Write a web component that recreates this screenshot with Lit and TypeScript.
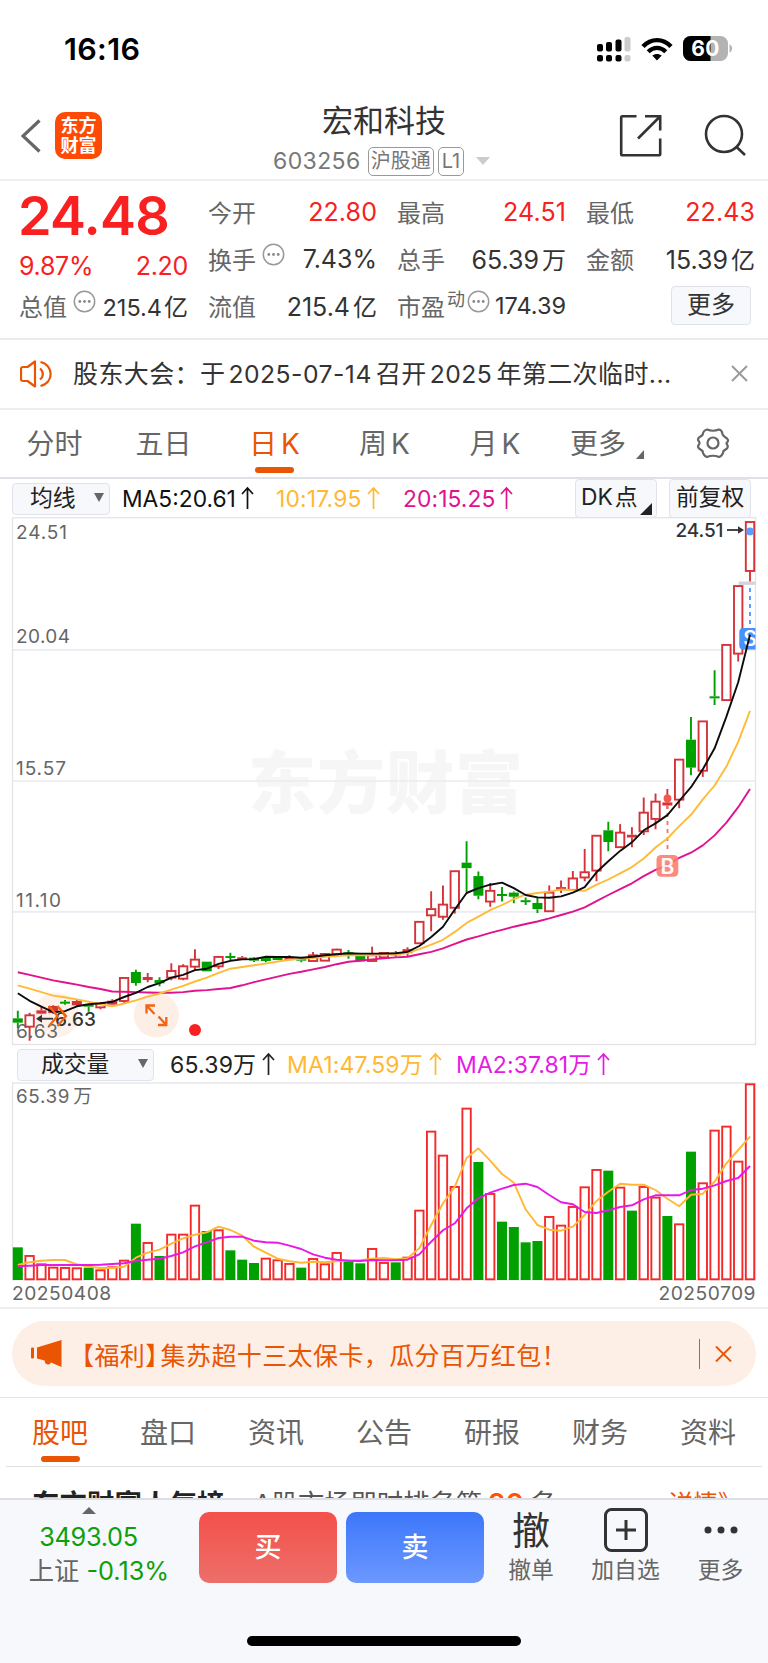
import { LitElement, html, css, svg } from "lit";
import { customElement } from "lit/decorators.js";

type Candle = [string, number, number, number, number];

// kind (g = falling, r = rising outline, f = rising solid), body top, body bottom, high, low
// Quiet opening stretch, in thirds of a pixel.
const EARLY: Candle[] = [
  ["g", 1525, 1538, 1502, 1555], ["r", 1515, 1550, 1508, 1592], ["f", 1501, 1511, 1490, 1513], ["f", 1488, 1509, 1486, 1512],
  ["g", 1475, 1480, 1470, 1484], ["f", 1473, 1486, 1470, 1490], ["g", 1484, 1490, 1482, 1505], ["r", 1481, 1492, 1476, 1498],
  ["f", 1472, 1484, 1468, 1486], ["r", 1403, 1473, 1403, 1481], ["g", 1386, 1419, 1379, 1427], ["f", 1401, 1410, 1389, 1417],
  ["g", 1410, 1420, 1402, 1429], ["r", 1382, 1403, 1360, 1411], ["r", 1368, 1406, 1363, 1411], ["r", 1348, 1370, 1318, 1382],
  ["g", 1355, 1384, 1355, 1384], ["r", 1340, 1369, 1340, 1377], ["g", 1338, 1342, 1328, 1351], ["f", 1342, 1349, 1338, 1350],
  ["g", 1343, 1352, 1341, 1356], ["g", 1344, 1353, 1343, 1357], ["g", 1342, 1350, 1342, 1350], ["f", 1342, 1350, 1336, 1351],
  ["g", 1346, 1352, 1345, 1357], ["r", 1335, 1353, 1326, 1354], ["r", 1331, 1352, 1331, 1352], ["r", 1318, 1333, 1316, 1333],
  ["g", 1327, 1334, 1320, 1346], ["g", 1334, 1354, 1334, 1354], ["r", 1335, 1353, 1310, 1353], ["r", 1328, 1342, 1328, 1342],
  ["f", 1328, 1336, 1323, 1340],
];
// The rally, in units of the moving-average scale.
const RALLY: Candle[] = [
  ["f", 1275, 1287, 1270, 1298], ["r", 1195, 1258, 1195, 1258], ["r", 1158, 1177, 1107, 1223],
  ["r", 1145, 1181, 1090, 1190], ["r", 1048, 1155, 1048, 1172], ["g", 1024, 1040, 962, 1110], ["g", 1063, 1120, 1050, 1130],
  ["r", 1105, 1137, 1083, 1152], ["g", 1115, 1119, 1095, 1137], ["g", 1111, 1123, 1108, 1142], ["g", 1133, 1137, 1125, 1147],
  ["g", 1141, 1159, 1123, 1170], ["r", 1110, 1165, 1090, 1165], ["f", 1095, 1103, 1076, 1112], ["r", 1069, 1103, 1048, 1106],
  ["r", 1051, 1067, 984, 1078], ["r", 945, 1047, 945, 1078], ["g", 930, 964, 905, 991], ["r", 936, 979, 912, 979],
  ["f", 943, 951, 921, 979], ["r", 878, 933, 835, 944], ["r", 846, 897, 823, 927], ["f", 849, 858, 810, 868],
  ["r", 724, 841, 724, 866], ["g", 667, 748, 601, 770], ["r", 613, 757, 613, 775], ["g", 541, 547, 465, 566],
  ["r", 391, 552, 391, 552], ["r", 220, 417, 220, 440], ["r", 34, 177, 34, 208],
];
const MA5 = [1403, 1425, 1442, 1458, 1455, 1441, 1435, 1432, 1428, 1414, 1402, 1385, 1374, 1358, 1350, 1336, 1332, 1318, 1309, 1305, 1304, 1297, 1298, 1298, 1300, 1297, 1293, 1290, 1287, 1288, 1288, 1288, 1287, 1283, 1266, 1240, 1210, 1160, 1112, 1098, 1088, 1082, 1098, 1118, 1125, 1126, 1122, 1111, 1095, 1052, 1020, 990, 965, 930, 910, 886, 845, 805, 753, 692, 600, 500, 362];
const MA10 = [1380, 1390, 1400, 1410, 1415, 1421, 1428, 1435, 1441, 1433, 1424, 1413, 1404, 1393, 1382, 1369, 1358, 1344, 1332, 1327, 1322, 1317, 1311, 1306, 1303, 1301, 1297, 1295, 1293, 1293, 1293, 1291, 1290, 1287, 1275, 1262, 1248, 1225, 1199, 1181, 1162, 1147, 1130, 1117, 1112, 1108, 1102, 1104, 1106, 1088, 1073, 1055, 1037, 1012, 980, 954, 918, 885, 840, 800, 745, 673, 583];
const MA20 = [1342, 1350, 1358, 1366, 1372, 1378, 1385, 1391, 1398, 1399, 1400, 1401, 1402, 1402, 1400, 1396, 1394, 1391, 1388, 1380, 1371, 1363, 1355, 1347, 1341, 1334, 1327, 1319, 1312, 1309, 1305, 1302, 1299, 1297, 1290, 1283, 1273, 1260, 1247, 1238, 1228, 1219, 1210, 1202, 1195, 1186, 1176, 1166, 1154, 1136, 1118, 1101, 1084, 1063, 1045, 1032, 1010, 995, 974, 945, 908, 863, 810];

const VOLUMES = "g622 r647 r672 r682 r683 r684 g683 r690 r681 r661 g551 r608 g648 r583 r583 r496 g573 r570 g631 g659 g669 r655 r660 r671 g683 r656 r672 r638 g664 g670 r626 r668 g667 r652 r511 r274 r346 r440 r205 g366 r461 g545 g561 g607 g603 r530 r556 r500 r441 r389 g392 r442 g512 r440 r472 g528 r552 g335 r429 r271 r259 r364 r132".split(" ");
const VMA1 = [675, 667, 662, 660, 660, 673, 680, 684, 684, 680, 653, 638, 629, 611, 595, 584, 577, 560, 570, 587, 620, 638, 656, 664, 668, 665, 667, 664, 661, 661, 656, 654, 658, 655, 625, 555, 490, 440, 354, 325, 362, 402, 428, 508, 555, 569, 572, 560, 525, 483, 455, 431, 434, 434, 450, 476, 499, 464, 461, 425, 370, 330, 290];
const VMA2 = [679, 677, 675, 675, 675, 675, 675, 674, 672, 670, 663, 659, 656, 648, 637, 619, 607, 594, 590, 590, 602, 607, 608, 617, 627, 643, 653, 659, 662, 663, 660, 661, 661, 659, 643, 605, 571, 550, 505, 475, 458, 446, 435, 431, 441, 465, 487, 493, 516, 519, 511, 501, 496, 478, 466, 466, 466, 450, 446, 436, 423, 414, 378];

const THIRD = 3;
const PRICE_SCALE = 2.9037;
const cx = (i: number) => 17.8 + 11.81 * i;
const line = (ys: number[], base: number, scale: number) => ys.map((y, i) => `${cx(i).toFixed(1)},${(base + y / scale).toFixed(1)}`).join(" ");
const toPixels = (scale: number) => ([k, ...v]: Candle): Candle => [k, ...v.map((n) => 510 + n / scale)] as Candle;
const CANDLES = [...EARLY.map(toPixels(THIRD)), ...RALLY.map(toPixels(PRICE_SCALE))];

const upArrow = html`<svg class="up" width="13" height="24" viewBox="0 0 13 24" fill="none" stroke="currentColor" stroke-width="1.7"><path d="M6.5 23V2M1 8l5.5-6L12 8"/></svg>`;
const info = html`<svg class="info" width="23" height="23" viewBox="0 0 23 23"><circle cx="11.5" cy="11.5" r="10.2" fill="none" stroke="#999" stroke-width="1.5"/><g fill="#888"><circle cx="6.8" cy="11.5" r="1.4"/><circle cx="11.5" cy="11.5" r="1.4"/><circle cx="16.2" cy="11.5" r="1.4"/></g></svg>`;

@customElement("kline-chart")
export class KlineChart extends LitElement {
  static styles = css`
    :host { display: block; height: 529px; }
    svg { display: block; }
    text { font-family: Inter, "Liberation Sans", sans-serif; font-size: 19px; fill: #666; }
    .mark { font-family: "Noto Sans CJK SC", sans-serif; font-size: 68px; font-weight: 900; fill: #f6f6f6; }
    .dark { fill: #333; font-weight: 500; }
    .badge { fill: #fff; font-size: 21px; font-weight: 600; text-anchor: middle; }
  `;
  render() {
    return html`<svg width="768" height="529" viewBox="0 517 768 529">
      <text class="mark" x="248" y="807.500" textLength="275">东方财富</text>
      <path d="M12.500 649.800H755.500M12.500 781H755.500M12.500 911.900H755.500" fill="none" stroke="#e9ecf2" stroke-width="1.700"/>
      <rect x="12.500" y="517.700" width="743" height="526.800" fill="none" stroke="#e4e4e8" stroke-width="1.300"/>
      <text x="16" y="539.300" textLength="51">24.51</text>
      <text x="16" y="643.200" textLength="54">20.04</text>
      <text x="16" y="774.500" textLength="50">15.57</text>
      <text x="16" y="906.700" textLength="45">11.10</text>
      <circle cx="56" cy="1015" r="22.500" fill="#fdeee6" opacity=".85"/>
      <circle cx="156.300" cy="1015" r="22.500" fill="#fdeee6"/>
      ${CANDLES.map(([k, t, b, h, l], i) => {
        const x = cx(i);
        const c = k === "g" ? "#00a000" : "#d5333a";
        return svg`<g stroke=${c} stroke-width="1.900">
          <path d="M${x} ${h}V${t}M${x} ${b}V${l}"/>
          ${k === "r"
            ? svg`<rect x=${x - 4.2} y=${t + 0.3} width="8.400" height=${b - t - 0.3} fill="#fff"/>`
            : svg`<rect x=${x - 5} y=${t} width="10" height=${Math.max(b - t, 2)} fill=${c} stroke="none"/>`}
        </g>`;
      })}
      <text x="16" y="1037.500" textLength="42">6.63</text>
      <path d="M738.500 583.200H755.500" stroke="#d2d4da" stroke-width="3.300"/>
      <path d="M750 588V624" stroke="#5a9cff" stroke-width="2" stroke-dasharray="4 4"/>
      <circle cx="750" cy="531.400" r="3.900" fill="#5a9cff"/>
      <clipPath id="edge"><rect x="0" y="517" width="755.500" height="529"/></clipPath>
      <g clip-path="url(#edge)"><rect x="739.300" y="628" width="21.500" height="21.500" rx="4" fill="#4a90fb"/><text class="badge" x="750" y="646.300">S</text></g>
      <path d="M667.500 805V851" stroke="#fa6d62" stroke-width="1.800" stroke-dasharray="4 4"/>
      <circle cx="667.500" cy="798.500" r="3.900" fill="#f4574d"/>
      <g fill="none" stroke-width="1.900" stroke-linejoin="round">
        <polyline points=${line(MA20, 510, PRICE_SCALE)} stroke="#e0128e"/>
        <polyline points=${line(MA10, 510, PRICE_SCALE)} stroke="#ffbb38"/>
        <polyline points=${line(MA5, 510, PRICE_SCALE)} stroke="#0c0c0c"/>
      </g>
      <g opacity=".88"><rect x="656.500" y="855" width="21.800" height="21.800" rx="4.500" fill="#fd7a6e"/><text class="badge" x="667.500" y="873.600">B</text></g>
      <text class="dark" x="675.500" y="537.200" textLength="48">24.51</text>
      <g stroke="#333" fill="#333" stroke-width="1.800"><path d="M727 530H740"/><path d="M738 526.300L744 530L738 533.700Z" stroke="none"/><path d="M53 1018.700H40"/><path d="M42 1014.700L36 1018.700L42 1022.700Z" stroke="none"/></g>
      <text class="dark" x="55" y="1025.800" textLength="41">6.63</text>
      <g fill="none" stroke="#f26411" stroke-width="2.300"><path d="M49 1006L57.500 1016L49 1026M57.500 1006L66 1016L57.500 1026"/><path d="M146.500 1013.500V1005.500H155M147 1006L154.500 1014M158 1025H166.300V1017M165.800 1024.500L158.500 1016.500"/></g>
      <circle cx="195" cy="1030" r="6" fill="#f82020"/>
    </svg>`;
  }
}

@customElement("volume-chart")
export class VolumeChart extends LitElement {
  static styles = css`
    :host { display: block; height: 199px; }
    svg { display: block; }
    text { font-family: Inter, "Noto Sans CJK SC", sans-serif; font-size: 18.8px; fill: #666; }
  `;
  render() {
    return html`<svg width="768" height="199" viewBox="0 1082 768 199">
      <rect x="12.500" y="1083" width="743" height="196.800" fill="none" stroke="#e4e4e8" stroke-width="1.3"/>
      <text x="16" y="1102.500" textLength="76">65.39<tspan dx="3">万</tspan></text>
      ${VOLUMES.map((v, i) => {
        const y = 1040 + Number(v.slice(1)) / 3;
        return v[0] === "g"
          ? svg`<rect x=${cx(i) - 5} y=${y} width="10" height=${1280 - y} fill="#00a000"/>`
          : svg`<rect x=${cx(i) - 4.2} y=${y + 0.3} width="8.400" height=${1279 - y} fill="#fff" stroke="#f42a2a" stroke-width="1.900"/>`;
      })}
      <g fill="none" stroke-width="1.900" stroke-linejoin="round">
        <polyline points=${line(VMA1, 1040, THIRD)} stroke="#ffb833"/>
        <polyline points=${line(VMA2, 1040, THIRD)} stroke="#e619e6"/>
      </g>
    </svg>`;
  }
}

@customElement("app-root")
export class AppRoot extends LitElement {
  static styles = css`
    :host { display: block; width: 768px; height: 1663px; overflow: hidden; background: #fff; color: #333; font-family: Inter, "Noto Sans CJK SC", sans-serif; white-space: nowrap; }
    * { box-sizing: border-box; }
    svg { display: block; flex: none; }
    .row { display: flex; align-items: center; }
    .status { height: 90px; padding: 7px 35px 0 64px; justify-content: space-between; color: #000; }
    .clock { font-size: 30.5px; font-weight: 600; letter-spacing: .35px; }
    .status-icons { gap: 10px; }
    .header { height: 91px; border-bottom: 2px solid #efeff0; display: grid; grid-template-columns: 34px 48px 1fr 85px 42px; padding: 0 22px 0 21px; }
    .back { padding-top: 29px; }
    .logo { width: 47px; height: 47px; margin-top: 22px; border-radius: 10px; background: #ff4a05; color: #fff; font-size: 18px; line-height: 19.5px; font-weight: 700; text-align: center; padding-top: 4px; }
    .title { padding-left: 150px; }
    .name { font-size: 31px; line-height: 36px; padding: 13px 0 0 69px; }
    .code { color: #777; font-size: 23px; letter-spacing: .4px; height: 30px; margin-top: 7px; padding-left: 20px; }
    .tag { height: 29px; border: 1.5px solid #999; border-radius: 5px; font-size: 20px; line-height: 26px; letter-spacing: 0; padding: 0 2px; margin-left: 7px; color: #777; }
    .tag.l1 { margin-left: 4px; padding: 0 3px; }
    .caret { margin-left: 12px; }
    .head-icon { padding-top: 24px; }
    .quote { height: 159px; padding: 0 13px 0 19px; display: grid; grid-template-columns: 169px 169px 169px 169px; column-gap: 20px; border-bottom: 2px solid #ebebed; }
    .col { display: flex; flex-direction: column; padding-top: 7px; }
    .cell { display: flex; align-items: center; height: 47px; font-size: 25px; color: #333; }
    .cell > .label { color: #666; font-size: 24px; }
    .cell > .value { margin-left: auto; }
    .cell > .value.red { letter-spacing: .1px; }
    .value .han { font-size: 24px; margin-left: 3px; }
    .red { color: #f82020; }
    .price { color: #f82020; font-weight: 600; font-size: 54px; line-height: 56px; letter-spacing: -.7px; height: 64px; margin-left: -1px; margin-top: 0; }
    .change { display: flex; justify-content: space-between; color: #f82020; font-size: 25px; letter-spacing: -.3px; line-height: 30px; margin-top: -1px; height: 31px; }
    .info { margin: -9px 0 0 6px; }
    .small { font-size: 23.5px; }
    .small .han { margin-left: 2px; }
    .super { font-size: 18px; color: #666; margin: -16px 0 0 2px; }
    .super + .info { margin-left: 2px; }
    .more { margin: 4px 4px 0 auto; width: 80px; height: 39px; border: 1.5px solid #dfe2e9; border-radius: 4px; background: #f7f8fb; font-size: 24px; line-height: 36px; text-align: center; }
    .notice { height: 70px; padding: 0 20px 1px 20px; border-bottom: 2px solid #eee; font-size: 25px; letter-spacing: .4px; }
    .notice-text { margin-left: 21px; padding-bottom: 3px; }
    .num { font-size: 24.7px; margin: 0 4px 0 3px; letter-spacing: .5px; }
    .num.year { letter-spacing: .5px; }
    .end { margin-left: auto; }
    .periods { height: 69px; display: grid; grid-template-columns: 109px 109px 113px 107px 114px 106px 110px; border-bottom: 2px solid #dfe1e8; font-size: 28px; color: #666; }
    .tab { display: flex; flex-direction: column; align-items: center; justify-content: flex-start; line-height: 40px; padding-top: 14px; }
    .tab .k { margin-left: 4px; }
    .active { color: #ea5504; }
    .active::after { content: ""; width: 39px; height: 6px; border-radius: 3px; background: #ea5504; margin-top: 3px; }
    .tri-tab { flex-direction: row; align-items: flex-start; justify-content: center; gap: 10px; padding-left: 4px; }
    .tri-tab svg { margin-top: 26px; }
    .gear { padding-top: 17px; }
    .legend { height: 38px; padding: 0 17px 0 12px; font-size: 22.8px; }
    .box { display: flex; align-items: center; border: 1.5px solid #e0e3ea; border-radius: 4px; background: #f7f8fb; height: 32px; font-size: 22.8px; line-height: 26px; color: #222; }
    .box > span { margin-top: -2px; }
    .box > .down { margin-top: -3px; }
    .ma-select { width: 98px; padding-left: 17px; gap: 18px; margin-top: 1px; }
    .ma { display: flex; align-items: center; gap: 6px; }
    .m5 { width: 154px; margin-left: 12px; color: #111; letter-spacing: 0; }
    .m10 { width: 127px; color: #ffb833; letter-spacing: .2px; }
    .m20 { color: #e0128e; letter-spacing: .1px; }
    .m5 svg, .m10 svg { margin-left: -1px; }
    .m20 svg { margin-left: -2px; }
    .dk { margin-left: auto; width: 82px; height: 39px; padding-left: 5px; }
    .dk .point { margin-left: 2px; }
    .dk svg { margin: 22px 0 0 2px; }
    .adjust { margin-left: 12px; width: 82px; height: 39px; padding-left: 6px; }
    .vol-legend { height: 36px; padding: 0 0 0 17px; font-size: 23px; }
    .vol-select { width: 137px; padding-left: 23px; gap: 29px; margin-top: 1px; }
    .ma > span { margin-top: -2px; }
    .v0 { width: 117px; margin-left: 16px; color: #222; letter-spacing: .2px; }
    .v1 { width: 169px; color: #ffb833; letter-spacing: .15px; }
    .v2 { color: #e619e6; letter-spacing: .1px; }
    .v0 svg, .v1 svg, .v2 svg { margin-left: 0; }
    .dates { height: 28px; display: flex; justify-content: space-between; padding: 0 12px; color: #666; font-size: 19.2px; line-height: 25px; letter-spacing: .5px; border-bottom: 2px solid #eee; }
    .promo { height: 89px; padding: 12px 12px; border-bottom: 1.5px solid #e5e5e5; }
    .banner { height: 65px; border-radius: 33px; background: #fdeee6; color: #ea5504; padding: 0 24px 0 19px; font-size: 25px; letter-spacing: .4px; }
    .banner-text { margin-left: 6px; padding-top: 1px; }
    .bracket { margin-right: -10px; }
    .banner .end { height: 30px; border-left: 1.6px solid #ea5504; padding: 7px 0 0 15px; margin-top: 1px; }
    .sections { height: 69px; margin: 0 6px; display: grid; grid-template-columns: repeat(7, 108px); border-bottom: 1.5px solid #e2e2e2; font-size: 28px; color: #666; }
    .sections .tab { padding-top: 15px; }
    .rank { height: 31px; overflow: hidden; display: flex; align-items: flex-start; padding: 19px 34px 0 32px; font-size: 26.3px; line-height: 36px; color: #555; }
    .rank b { font-size: 27.5px; color: #222; margin-right: 29px; }
    .rank .n { color: #ff5500; font-weight: 600; font-size: 28px; margin: 0 6px; }
    .rank .detail { color: #ea5504; font-size: 25px; margin-right: -9px; }
    .dock { height: 166px; background: #f7f8fb; border-top: 2px solid #dcdee4; }
    .dock-main { display: grid; grid-template-columns: 199px 138px 9px 138px 284px; height: 96px; }
    .index { display: flex; flex-direction: column; align-items: center; color: #0ca00c; font-size: 25.3px; line-height: 34px; padding: 7px 0 0 0; }
    .index > .quote-num { padding: 6px 22px 0 0; letter-spacing: -.3px; }
    .index > .tri { margin-right: 22px; }
    .index > .pct { margin-right: 1px; }
    .index i { font-style: normal; color: #666; margin-right: 7px; }
    .trade { height: 71px; margin-top: 12px; border-radius: 10px; color: #fff; font-size: 27px; font-weight: 500; line-height: 71px; text-align: center; }
    .buy { background: linear-gradient(#f4504a, #ed6f6a); }
    .sell { background: linear-gradient(#3c77fa, #6c98ff); grid-column: 4; }
    .acts { display: grid; grid-template-columns: 94px 95px 95px; }
    .act { display: flex; flex-direction: column; align-items: center; font-size: 22.8px; color: #666; line-height: 32px; }
    .act .pic { height: 54px; display: flex; align-items: center; padding-top: 6px; font-size: 38px; color: #333; }
    .home { width: 274px; height: 10px; border-radius: 5px; background: #000; margin: 40px auto 0; }
  `;

  render() {
    const down = html`<svg class="down" width="10" height="9" viewBox="0 0 10 9"><path d="M0 0H10L5 9Z" fill="#666"/></svg>`;
    return html`
      <div class="row status">
        <span class="clock">16:16</span>
        <div class="row status-icons">
          <svg width="34" height="26" viewBox="0 0 34 26"><rect x="0" y="8" width="6" height="7.500" rx="2"/><rect x="9" y="6" width="6" height="9.500" rx="2"/><rect x="18.500" y="3.500" width="6" height="12" rx="2"/><rect x="27.500" y="1" width="6" height="14.500" rx="2" fill="#ccc"/><rect x="0" y="19" width="6" height="6.500" rx="2"/><rect x="9" y="19" width="6" height="6.500" rx="2"/><rect x="18.500" y="19" width="6" height="6.500" rx="2"/><rect x="27.500" y="19" width="6" height="6.500" rx="2" fill="#ccc"/></svg>
          <svg width="32" height="24" viewBox="0 0 32 24" fill="none" stroke="#000"><path d="M2 9.500C10 1 22 1 30 9.500" stroke-width="4.400"/><path d="M7.200 14.800C12.500 9.500 19.500 9.500 24.800 14.800" stroke-width="4.200"/><path d="M16 23.500L11.300 18.600C14 16.300 18 16.300 20.700 18.600Z" fill="#000" stroke="none"/></svg>
          <svg width="50" height="26" viewBox="0 0 50 26"><defs><clipPath id="bat"><rect x="0" y="0" width="45" height="25" rx="7.500"/></clipPath></defs><g clip-path="url(#bat)"><rect width="45" height="25" fill="#b3b3b3"/><rect width="27.500" height="25" fill="#000"/></g><path d="M46.500 8.500C50 9.500 50 15.500 46.500 16.500Z" fill="#b3b3b3"/><text x="22.300" y="20" font-family="Inter, sans-serif" font-size="21" font-weight="700" fill="#fff" text-anchor="middle" textLength="28">60</text></svg>
        </div>
      </div>

      <div class="header">
        <div class="back"><svg width="20" height="34" viewBox="0 0 20 34" fill="none" stroke="#666" stroke-width="3.200"><path d="M18.500 1.500L2 17L18.500 32.500"/></svg></div>
        <div class="logo">东方<br>财富</div>
        <div class="title">
          <div class="name">宏和科技</div>
          <div class="row code">603256<span class="tag">沪股通</span><span class="tag l1">L1</span><svg class="caret" width="14" height="8" viewBox="0 0 14 8"><path d="M0 0H14L7 8Z" fill="#ccc"/></svg></div>
        </div>
        <div class="head-icon"><svg width="44" height="44" viewBox="0 0 44 44" fill="none" stroke="#333" stroke-width="2.600"><path d="M17.500 2.300H3.500Q2.200 2.300 2.200 3.600V40Q2.200 41.300 3.500 41.300H39.500Q41.200 41.300 41.200 40V24.500M26 2.300H41.200V16.500M40.500 3L19 24.500"/></svg></div>
        <div class="head-icon"><svg width="44" height="44" viewBox="0 0 44 44" fill="none" stroke="#333" stroke-width="2.600"><circle cx="20" cy="20" r="18"/><path d="M32 32.500L41 41"/></svg></div>
      </div>

      <div class="quote">
        <div class="col">
          <div class="price">24.48</div>
          <div class="change"><span>9.87%</span><span>2.20</span></div>
          <div class="cell"><span class="label">总值</span>${info}<span class="value small">215.4<span class="han">亿</span></span></div>
        </div>
        <div class="col">
          <div class="cell"><span class="label">今开</span><span class="value red">22.80</span></div>
          <div class="cell"><span class="label">换手</span>${info}<span class="value">7.43%</span></div>
          <div class="cell"><span class="label">流值</span><span class="value">215.4<span class="han">亿</span></span></div>
        </div>
        <div class="col">
          <div class="cell"><span class="label">最高</span><span class="value red">24.51</span></div>
          <div class="cell"><span class="label">总手</span><span class="value">65.39<span class="han">万</span></span></div>
          <div class="cell"><span class="label">市盈</span><span class="super">动</span>${info}<span class="value small">174.39</span></div>
        </div>
        <div class="col">
          <div class="cell"><span class="label">最低</span><span class="value red">22.43</span></div>
          <div class="cell"><span class="label">金额</span><span class="value">15.39<span class="han">亿</span></span></div>
          <div class="more">更多</div>
        </div>
      </div>

      <div class="row notice">
        <svg width="32" height="28" viewBox="0 0 32 28" fill="none" stroke="#ea5504" stroke-width="2.200"><path d="M15 1.500V26.500L7.500 21H3Q1 21 1 19V9Q1 7 3 7H7.500Z" stroke-linejoin="round"/><path d="M20 8.500C23.800 11.500 23.800 16.500 20 19.500M20.500 2C34 5 34 23 20.500 26"/></svg>
        <span class="notice-text">股东大会：于<span class="num">2025-07-14</span>召开<span class="num year">2025</span>年第二次临时...</span>
        <svg class="end" width="17" height="17" viewBox="0 0 17 17" stroke="#999" stroke-width="1.900"><path d="M1 1L16 16M16 1L1 16"/></svg>
      </div>

      <div class="periods">
        <div class="tab">分时</div><div class="tab">五日</div><div class="tab active"><span>日<span class="k">K</span></span></div><div class="tab"><span>周<span class="k">K</span></span></div><div class="tab"><span>月<span class="k">K</span></span></div>
        <div class="tab tri-tab">更多<svg width="8" height="9" viewBox="0 0 8 9"><path d="M8 0V9H0Z" fill="#666"/></svg></div>
        <div class="tab gear"><svg width="34" height="32" viewBox="0 0 34 32" fill="none" stroke="#666" stroke-width="2.200"><path d="M11 2.500Q17 5 23 2.500Q26 3 26.500 7Q27 9 31 11.500Q33 13.500 31 15.500Q30 16 31 17.500Q32.500 19.500 31 21.500L27.500 24Q26.500 29 23 30Q17 27.500 11 30Q7.500 29 6.500 24L3 21.500Q1 19.500 3 17.500Q4 16 3 14.500Q1 12.500 3 10.500L6.500 8Q7.500 3 11 2.500Z"/><circle cx="17" cy="16" r="5.500"/></svg></div>
      </div>

      <div class="row legend">
        <div class="box ma-select"><span>均线</span>${down}</div>
        <div class="ma m5">MA5:20.61${upArrow}</div>
        <div class="ma m10">10:17.95${upArrow}</div>
        <div class="ma m20">20:15.25${upArrow}</div>
        <div class="box dk"><span>DK</span><span class="point">点</span><svg width="12" height="12" viewBox="0 0 12 12"><path d="M12 0V12H0Z" fill="#222"/></svg></div>
        <div class="box adjust"><span>前复权</span></div>
      </div>

      <kline-chart></kline-chart>

      <div class="row vol-legend">
        <div class="box vol-select"><span>成交量</span>${down}</div>
        <div class="ma v0"><span>65.39万</span>${upArrow}</div>
        <div class="ma v1"><span>MA1:47.59万</span>${upArrow}</div>
        <div class="ma v2"><span>MA2:37.81万</span>${upArrow}</div>
      </div>

      <volume-chart></volume-chart>
      <div class="dates"><span>20250408</span><span>20250709</span></div>

      <div class="promo">
        <div class="row banner">
          <svg width="32" height="27" viewBox="0 0 32 27" fill="#ea5504"><rect x="0" y="7.500" width="3" height="11" rx="1"/><path d="M30.500 0V27L20 22.500Q18 26 14.500 23.500L13.500 20.500L6 18.500V7.500Z"/></svg>
          <span class="banner-text">【福利<span class="bracket">】</span>集苏超十三太保卡，瓜分百万红包！</span>
          <div class="end"><svg width="17" height="16" viewBox="0 0 17 16" stroke="#ea5504" stroke-width="1.900"><path d="M1 .5L16 15.500M16 .5L1 15.500"/></svg></div>
        </div>
      </div>

      <div class="sections">
        ${["股吧", "盘口", "资讯", "公告", "研报", "财务", "资料"].map((t, i) => html`<div class="tab ${i === 0 ? "active" : ""}">${t}</div>`)}
      </div>
      <div class="rank"><b>东方财富人气榜</b><span>A股市场即时排名第</span><span class="n">20</span><span>名</span><span class="end detail">详情》</span></div>

      <div class="dock">
        <div class="dock-main">
          <div class="index">
            <svg class="tri" width="14" height="7" viewBox="0 0 14 7"><path d="M7 0L14 7H0Z" fill="#666"/></svg>
            <span class="quote-num">3493.05</span><span class="pct"><i>上证</i>-0.13%</span>
          </div>
          <div class="trade buy">买</div>
          <div class="trade sell">卖</div>
          <div class="acts">
            <div class="act"><span class="pic">撤</span>撤单</div>
            <div class="act"><span class="pic"><svg width="44" height="44" viewBox="0 0 44 44" fill="none" stroke="#333" stroke-width="3"><rect x="1.500" y="1.500" width="41" height="41" rx="6"/><path d="M22 12V32M12 22H32"/></svg></span>加自选</div>
            <div class="act"><span class="pic"><svg width="34" height="8" viewBox="0 0 34 8" fill="#333"><circle cx="4" cy="4" r="3.500"/><circle cx="17" cy="4" r="3.500"/><circle cx="30" cy="4" r="3.500"/></svg></span>更多</div>
          </div>
        </div>
        <div class="home"></div>
      </div>
    `;
  }
}
